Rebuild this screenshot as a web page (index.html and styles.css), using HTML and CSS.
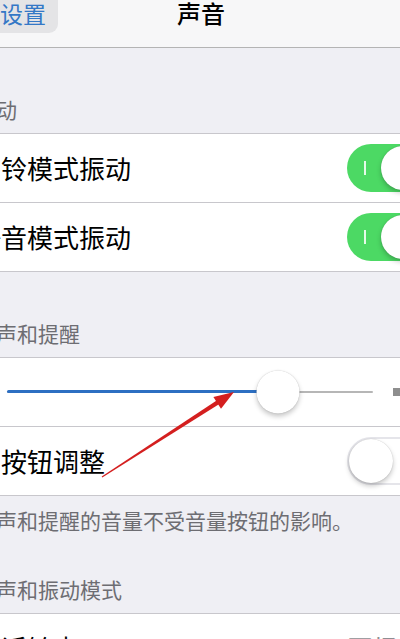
FILE: index.html
```html
<!DOCTYPE html>
<html lang="zh-CN">
  <head>
    <meta charset="UTF-8" />
    <meta name="viewport" content="width=device-width, initial-scale=1.0" />
    <title>声音</title>
    <link rel="stylesheet" href="styles.css">
  </head>
  <body>
    <div class="screen">
      <header class="navbar">
        <a class="back">
          <svg class="chevron" width="14" height="24" viewBox="0 0 14 24">
            <path d="M12 2 L3 12 L12 22" fill="none" stroke="#3478c6" stroke-width="3" />
          </svg>
          <span>设置</span>
        </a>
        <h1 class="title">声音</h1>
        <span></span>
      </header>

      <div class="section-header">振动</div>
      <div class="group">
        <div class="row">
          <span class="label">响铃模式振动</span>
          <span class="switch on"><i class="on-mark"></i><span class="knob"></span></span>
        </div>
        <div class="row">
          <span class="label">静音模式振动</span>
          <span class="switch on"><i class="on-mark"></i><span class="knob"></span></span>
        </div>
      </div>

      <div class="section-header">铃声和提醒</div>
      <div class="group">
        <div class="row slider-row">
          <svg class="vol-min" width="19" height="22" viewBox="0 0 19 22">
            <rect x="0" y="7" width="5" height="8" fill="#8e8e8e" />
            <path d="M5 7 L12 1 L12 21 L5 15 Z" fill="#8e8e8e" />
          </svg>
          <div class="track">
            <div class="fill" style="width: 74%"></div>
            <span class="thumb" style="left: 74%"></span>
          </div>
          <svg class="vol-max" width="34" height="26" viewBox="0 0 34 26">
            <rect x="0" y="9" width="7" height="8" fill="#8e8e8e" />
            <path d="M7 9 L15 2 L15 24 L7 17 Z" fill="#8e8e8e" />
            <path d="M20 8 Q24 13 20 18 M24 5 Q30 13 24 21 M28 2 Q36 13 28 24" fill="none" stroke="#8e8e8e" stroke-width="2" />
          </svg>
        </div>
        <div class="row">
          <span class="label">用按钮调整</span>
          <span class="switch"><span class="knob"></span></span>
        </div>
      </div>
      <div class="section-footer">铃声和提醒的音量不受音量按钮的影响。</div>

      <div class="section-header after-footer">铃声和振动模式</div>
      <div class="group">
        <div class="row">
          <span class="label">电话铃声</span>
          <span class="detail">
            开场
            <svg width="13" height="22" viewBox="0 0 13 22">
              <path d="M2 2 L11 11 L2 20" fill="none" stroke="#c7c7cc" stroke-width="2.5" />
            </svg>
          </span>
        </div>
      </div>
    </div>

    <!-- red annotation arrow pointing at the slider -->
    <svg class="arrow" width="400" height="639" viewBox="0 0 400 639">
      <polygon points="102.3,477.4 101.7,476.6 219.3,398.8 221.7,402.5" fill="#d41f1f" />
      <polygon points="234,392 213.4,396.9 221,408.7" fill="#d41f1f" />
    </svg>
  </body>
</html>
```

FILE: styles.css
```css
:root {
  --bg: #efeff4;
  --sep: #c8c7cc;
  --muted: #6d6d72;
  --green: #4cd964;
  --blue: #2d6fc2;
}

body {
  margin: 0;
  width: 400px;
  height: 639px;
  overflow: hidden;
  position: relative;
  background-color: var(--bg);
  font-family: "Noto Sans CJK SC", "Noto Sans", sans-serif;
}

/* the photo is a crop of a wider phone screen */
.screen {
  width: 498px;
  margin-left: -48px;
}

.navbar {
  margin-top: -22px;
  height: 69px;
  background-color: #f7f7f8;
  border-bottom: 1px solid #b4b4b4;
  display: grid;
  grid-template-columns: 1fr auto 1fr;
  align-items: center;
}
.back {
  align-self: start;
  justify-self: start;
  margin-left: 8px;
  height: 55px;
  box-sizing: border-box;
  padding: 23px 12px 0 8px;
  display: flex;
  align-items: flex-start;
  gap: 18px;
  background-color: #e4e4e6;
  border-radius: 9px;
  color: #3478c6;
  font-size: 23px;
  line-height: 24px;
}
.title {
  margin: 0;
  font-size: 24px;
  line-height: 24px;
  font-weight: 500;
  color: #000;
}

.section-header {
  padding: 49px 23px 12px;
  font-size: 21px;
  line-height: 24px;
  color: var(--muted);
}
.section-header.after-footer {
  padding-top: 45px;
}
.section-footer {
  padding: 12px 23px 0;
  font-size: 21px;
  line-height: 24px;
  color: var(--muted);
}

.group {
  background-color: #fff;
  border-top: 1px solid var(--sep);
  border-bottom: 1px solid var(--sep);
}
.row {
  height: 68px;
  padding: 0 23px;
  display: flex;
  align-items: center;
  justify-content: space-between;
}
.row + .row {
  border-top: 1px solid var(--sep);
}
.label {
  font-size: 26px;
  line-height: 30px;
  color: #000;
}
.detail {
  display: flex;
  align-items: center;
  gap: 15px;
  font-size: 26px;
  line-height: 30px;
  color: #8e8e93;
}

.switch {
  position: relative;
  width: 80px;
  height: 48px;
  box-sizing: border-box;
  border-radius: 24px;
  border: 2px solid #e5e5ea;
  background-color: #fff;
}
.switch.on {
  border: none;
  background-color: var(--green);
}
.knob {
  position: absolute;
  left: 0;
  top: 0;
  width: 44px;
  height: 44px;
  border-radius: 50%;
  background-color: #fff;
  box-shadow: 0 3px 5px rgba(0, 0, 0, 0.22), 0 0 1px rgba(0, 0, 0, 0.25);
}
.switch.on .knob {
  left: 34px;
  top: 2px;
}
.on-mark {
  position: absolute;
  left: 17px;
  top: 17px;
  width: 2px;
  height: 14px;
  background-color: rgba(255, 255, 255, 0.85);
}

.slider-row {
  justify-content: flex-start;
}
.vol-min {
  margin-right: 13px;
  flex: none;
}
.vol-max {
  margin-left: 20px;
  flex: none;
}
.track {
  position: relative;
  flex: 1;
  height: 2px;
  background-color: #b6b6b6;
  border-radius: 1px;
}
.fill {
  position: absolute;
  left: 0;
  top: -1px;
  height: 3px;
  background-color: var(--blue);
  border-radius: 2px;
}
.thumb {
  position: absolute;
  top: 50%;
  width: 43px;
  height: 43px;
  transform: translate(-50%, -50%);
  border-radius: 50%;
  background-color: #fff;
  box-shadow: 0 3px 5px rgba(0, 0, 0, 0.22), 0 0 1px rgba(0, 0, 0, 0.25);
}

.arrow {
  position: absolute;
  left: 0;
  top: 0;
  pointer-events: none;
}
```
